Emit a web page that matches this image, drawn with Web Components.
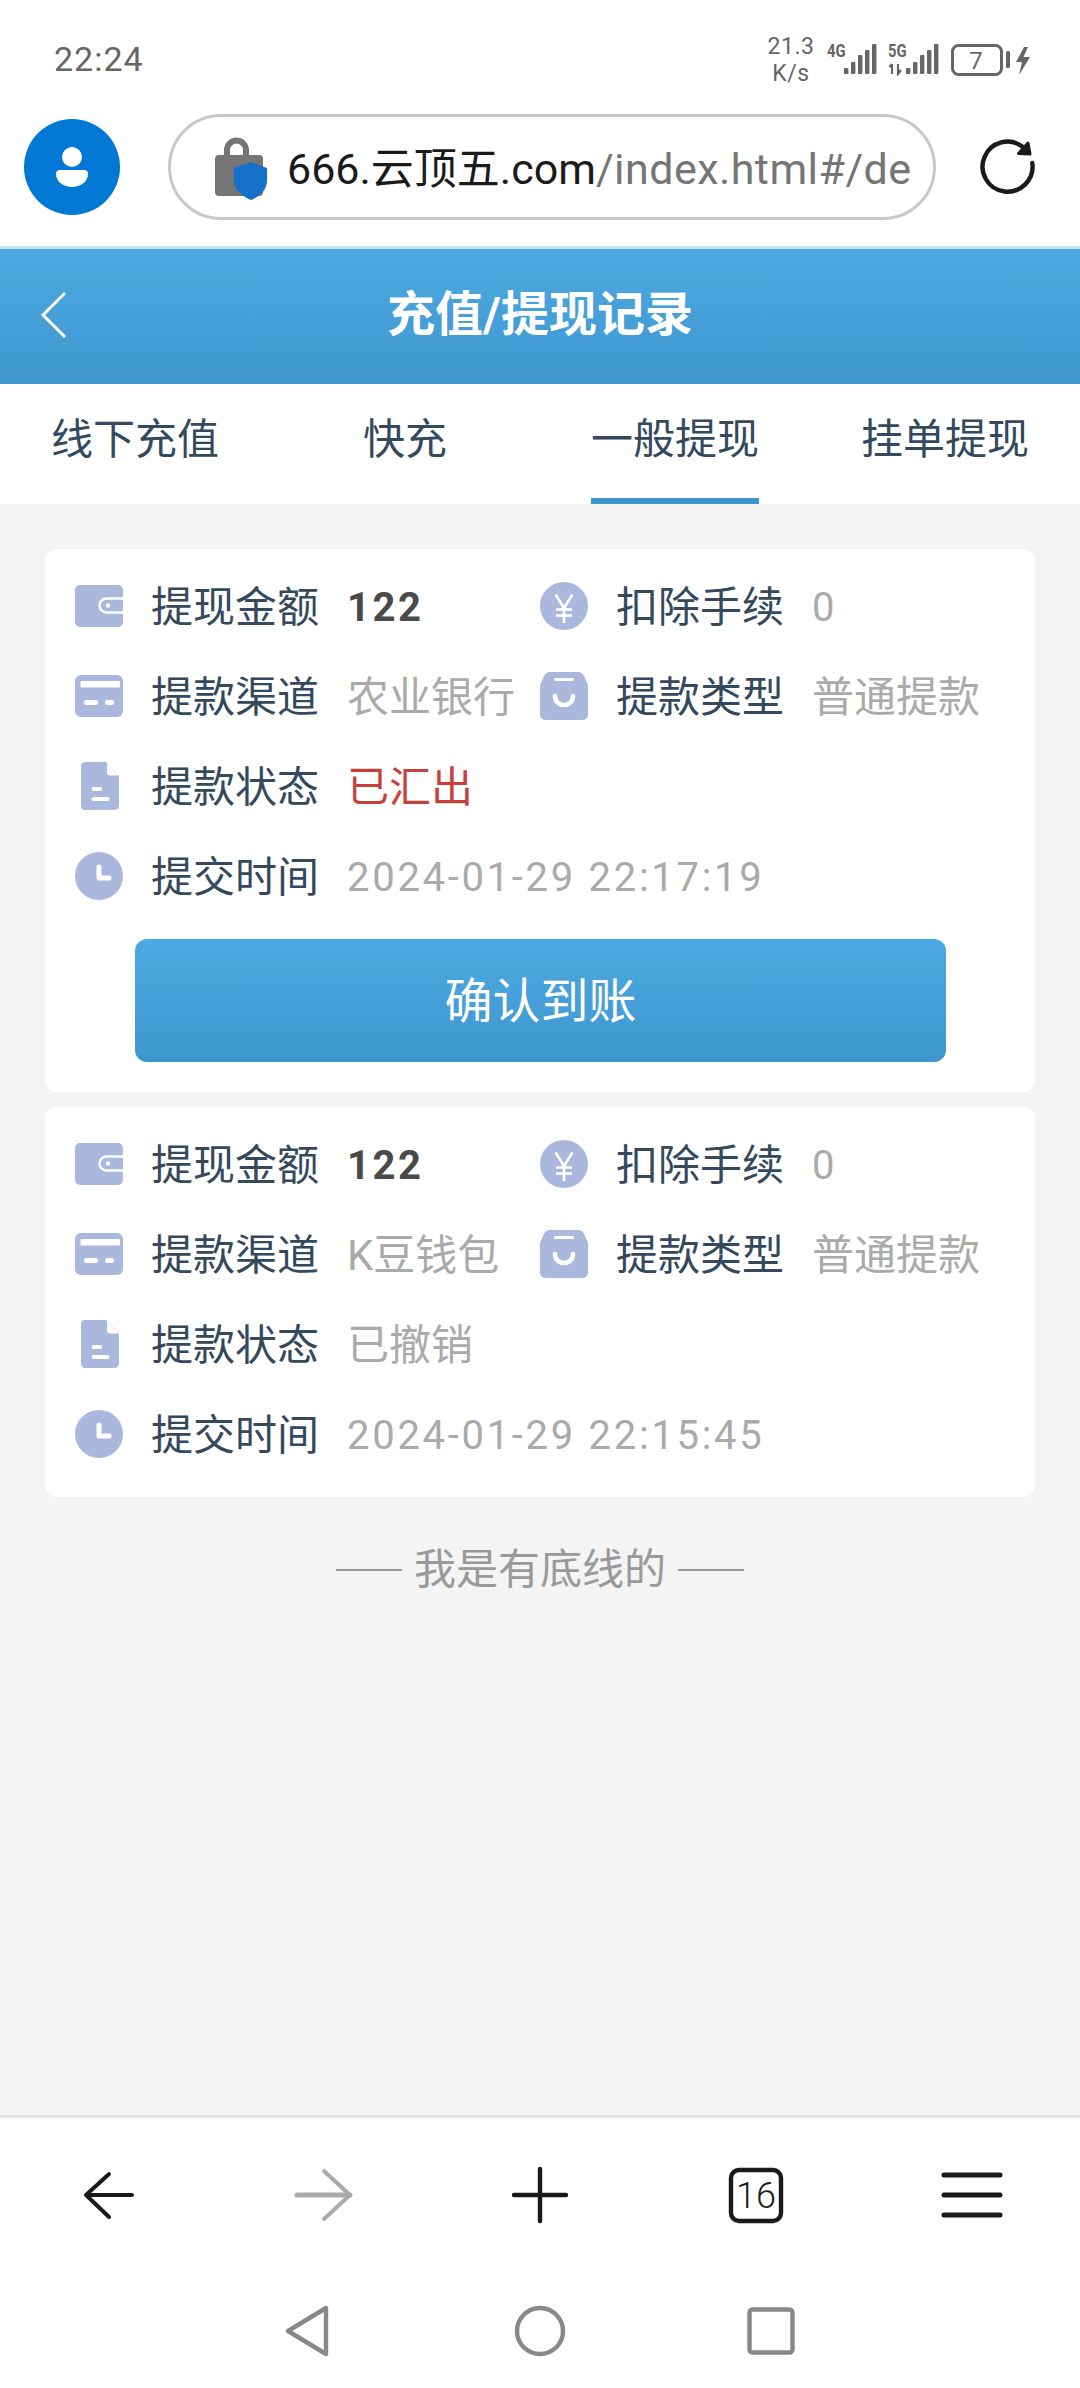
<!DOCTYPE html>
<html lang="zh-CN">
<head>
<meta charset="utf-8">
<title>充值/提现记录</title>
<style>
  html, body { margin: 0; padding: 0; background: #fff; }
  body { font-family: Roboto, "Noto Sans CJK SC", sans-serif; width: 1080px; height: 2388px; overflow: hidden; }
</style>
</head>
<body>
<phone-shell>
  <status-bar slot="top"></status-bar>
  <browser-bar slot="top"></browser-bar>
  <page-header slot="top" title="充值/提现记录"></page-header>
  <tab-strip slot="top" items="线下充值,快充,一般提现,挂单提现" active="2"></tab-strip>

  <record-card>
    <record-field icon="wallet" label="提现金额" value="122" kind="amount"></record-field>
    <record-field icon="yen" label="扣除手续" value="0" kind="num"></record-field>
    <record-field icon="card" label="提款渠道" value="农业银行"></record-field>
    <record-field icon="bag" label="提款类型" value="普通提款"></record-field>
    <record-field icon="doc" label="提款状态" value="已汇出" kind="alert" wide></record-field>
    <record-field icon="clock" label="提交时间" value="2024-01-29 22:17:19" kind="num" wide></record-field>
    <confirm-button slot="action">确认到账</confirm-button>
  </record-card>

  <record-card>
    <record-field icon="wallet" label="提现金额" value="122" kind="amount"></record-field>
    <record-field icon="yen" label="扣除手续" value="0" kind="num"></record-field>
    <record-field icon="card" label="提款渠道" value="K豆钱包"></record-field>
    <record-field icon="bag" label="提款类型" value="普通提款"></record-field>
    <record-field icon="doc" label="提款状态" value="已撤销" wide></record-field>
    <record-field icon="clock" label="提交时间" value="2024-01-29 22:15:45" kind="num" wide></record-field>
  </record-card>

  <list-end>我是有底线的</list-end>

  <browser-toolbar slot="bottom"></browser-toolbar>
  <system-nav slot="bottom"></system-nav>
</phone-shell>

<script>
  // Small helper: every element gets an open shadow root from a markup string.
  class Base extends HTMLElement {
    render(html) {
      if (!this.shadowRoot) this.attachShadow({ mode: 'open' });
      this.shadowRoot.innerHTML = html;
    }
  }

  customElements.define('phone-shell', class extends Base {
    connectedCallback() {
      this.render(`<style>
        :host { display: flex; flex-direction: column; width: 1080px; height: 2388px; background: #fff; }
        main { flex: 1; min-height: 0; background: #f4f4f4; padding: 45px 45px 0; display: flex; flex-direction: column; gap: 15px; }
      </style>
      <slot name="top"></slot>
      <main><slot></slot></main>
      <slot name="bottom"></slot>`);
    }
  });

  customElements.define('status-bar', class extends Base {
    connectedCallback() {
      // One signal cluster: network tag above, bars at the right, optional up/down marks under the tag.
      const signal = (tag, arrows, xs) => {
        const tops = [24, 18, 11, 6, 0];
        const bars = xs.map((x, i) => `<rect x="${x}" y="${tops[i]}" width="4.4" height="${30 - tops[i]}" rx="1" fill="#666"/>`).join('');
        const marks = arrows ? `<path d="M4 30V20M1.5 23L4 20M10 20V30L13 26" stroke="#666" stroke-width="2.2" fill="none"/>` : '';
        return `<div class="sig"><span>${tag}</span><svg width="52" height="32" viewBox="0 0 52 32">${marks}${bars}</svg></div>`;
      };
      this.render(`<style>
        :host { display: flex; align-items: center; justify-content: space-between; height: 96px; padding: 24px 49px 0 54px; box-sizing: border-box; color: #666; font-family: Roboto, sans-serif; }
        .time { font-size: 34px; letter-spacing: 1px; margin-top: -2px; }
        .right { display: flex; align-items: center; }
        .speed { display: flex; flex-direction: column; align-items: center; width: 46px; font-size: 23px; line-height: 27px; letter-spacing: .6px; margin-right: 13px; }
        .sig { position: relative; margin-right: 9px; }
        .sig.last { margin-right: 11px; }
        .sig span { position: absolute; left: 0; top: -3px; font: 700 19px/19px Roboto, sans-serif; transform: scaleX(.78); transform-origin: 0 0; }
        svg { display: block; }
      </style>
      <span class="time">22:24</span>
      <div class="right">
        <div class="speed"><span>21.3</span><span>K/s</span></div>
        ${signal('4G', false, [17, 24, 31, 38, 45])}
        ${signal('5G', true, [18, 25, 32, 39, 46]).replace('class="sig"', 'class="sig last"')}
        <svg width="80" height="32" viewBox="0 0 80 32">
          <rect x="1.5" y="1.5" width="49" height="29" rx="6" fill="none" stroke="#666" stroke-width="3"/>
          <text x="25" y="25" text-anchor="middle" font-family="Roboto" font-size="24" fill="#666">7</text>
          <rect x="55" y="7" width="4" height="17" rx="1.5" fill="#666"/>
          <path d="M73 3L65 18H71L68 31L79 13H72.5L77 3Z" fill="#666"/>
        </svg>
      </div>`);
    }
  });

  customElements.define('browser-bar', class extends Base {
    connectedCallback() {
      this.render(`<style>
        :host { display: flex; align-items: center; height: 150px; padding: 0 44px 8px 24px; box-sizing: border-box; background: #fff; }
        .avatar { flex: none; width: 96px; height: 96px; margin-right: 48px; border-radius: 50%; background: #0078d4; display: flex; align-items: center; justify-content: center; }
        .pill { flex: 1; min-width: 0; height: 106px; box-sizing: border-box; border: 3.5px solid #c8c8c8; border-radius: 53px; display: flex; align-items: center; padding: 0 21px 0 44px; gap: 20px; }
        .url { flex: 1; min-width: 0; overflow: hidden; white-space: nowrap; font-size: 43px; line-height: 60px; padding-top: 3px; color: #757575; letter-spacing: .45px; font-family: Roboto, "Noto Sans CJK SC", sans-serif; }
        .url b { font-weight: 400; color: #1a1a1a; letter-spacing: 0; }
        svg { display: block; flex: none; }
        .lock { margin-top: 3px; }
        .reload { margin-left: 44px; }
      </style>
      <div class="avatar">
        <svg width="32" height="40" viewBox="0 0 32 40" fill="#fff">
          <circle cx="16" cy="10" r="10"/>
          <path d="M4 23H28Q32 23 32 27C32 35 24 40 16 40S0 35 0 27Q0 23 4 23Z"/>
        </svg>
      </div>
      <div class="pill">
        <svg class="lock" width="52" height="64" viewBox="0 0 52 64">
          <path d="M12 20V13a9.5 9.5 0 0 1 19 0V20" fill="none" stroke="#757575" stroke-width="6"/>
          <rect x="0" y="18" width="48" height="41" rx="4" fill="#757575"/>
          <path d="M36 25L52 31V44C52 54 43 60 36 63C29 60 19 54 19 44V31Z" fill="#1470c8"/>
        </svg>
        <div class="url"><b>666.云顶五.com</b>/index.html#/de</div>
      </div>
      <svg class="reload" width="56" height="56" viewBox="0 0 56 56" fill="none" stroke="#1a1a1a" stroke-width="4.4" stroke-linecap="round" stroke-linejoin="round">
        <path d="M52.3 24A25 25 0 1 1 43 8"/>
        <path d="M48 4L50 15L38.5 14.5Z" fill="#1a1a1a" stroke-width="3"/>
      </svg>`);
    }
  });

  customElements.define('page-header', class extends Base {
    connectedCallback() {
      this.render(`<style>
        :host { display: grid; grid-template-columns: 1fr auto 1fr; align-items: center; height: 138px; box-sizing: border-box; border-top: 3px solid #cfe3ef; padding-bottom: 3px; background: linear-gradient(#4da9e1, #3f96cf); background-origin: padding-box; color: #fff; }
        h1 { margin: 0; font: 700 48px/1 Roboto, "Noto Sans CJK SC", sans-serif; }
        svg { display: block; margin-left: 40px; }
      </style>
      <svg width="28" height="48" viewBox="0 0 28 48" fill="none" stroke="#fff" stroke-width="3"><path d="M25 2L3 24L25 46"/></svg>
      <h1>${this.getAttribute('title')}</h1>
      <span></span>`);
    }
  });

  customElements.define('tab-strip', class extends Base {
    connectedCallback() {
      const active = +this.getAttribute('active');
      const items = this.getAttribute('items').split(',').map((t, i) =>
        `<div class="tab"><span class="${i === active ? 'on' : ''}">${t}</span></div>`).join('');
      this.render(`<style>
        :host { display: grid; grid-template-columns: repeat(4, 1fr); height: 120px; background: #fff; color: #34495e; font: 42px/1 Roboto, "Noto Sans CJK SC", sans-serif; }
        .tab { display: flex; justify-content: center; }
        span { display: flex; align-items: center; box-sizing: border-box; height: 120px; padding-bottom: 3px; border-bottom: 6px solid transparent; }
        span.on { border-bottom-color: #3f96cf; }
      </style>${items}`);
    }
  });

  customElements.define('record-card', class extends Base {
    connectedCallback() {
      this.render(`<style>
        :host { display: block; background: #fff; border-radius: 12px; padding: 12px 30px 18px; }
        .grid { display: grid; grid-template-columns: 465px 1fr; grid-auto-rows: 90px; }
        ::slotted([slot=action]) { margin: 18px 0 12px 60px; }
      </style>
      <div class="grid"><slot></slot></div>
      <slot name="action"></slot>`);
    }
  });

  const ICONS = {
    wallet: `<rect y="3" width="48" height="42" rx="5" fill="#a9b8dc"/>
      <path d="M48 16.5H31.5a7 7 0 0 0 0 14H48" fill="none" stroke="#fff" stroke-width="2.4"/>
      <circle cx="33" cy="23.5" r="2.2" fill="#fff"/>`,
    yen: `<circle cx="24" cy="24" r="24" fill="#a9b8dc"/>
      <path d="M15.5 12.5L24 26L32.5 12.5M16 27.5H32M16 33.5H32M24 26V41" fill="none" stroke="#fff" stroke-width="2.6"/>`,
    card: `<rect y="3" width="48" height="42" rx="6" fill="#a9b8dc"/>
      <rect x="5.5" y="9" width="39.5" height="6.5" rx="1" fill="#fff"/>
      <rect x="9" y="28" width="14" height="5" rx="2.5" fill="#fff"/>
      <rect x="30" y="28" width="9" height="5" rx="2.5" fill="#fff"/>`,
    bag: `<path d="M11 0H37C42 0 43 2 45 6L48 13V42Q48 48 42 48H6Q0 48 0 42V13L3 6C5 2 6 0 11 0Z" fill="#a9b8dc"/>
      <rect x="14" y="6" width="20" height="3" rx="1.5" fill="#fff"/>
      <path d="M15 24C15 36 33 36 33 24" fill="none" stroke="#fff" stroke-width="4.5" stroke-linecap="round"/>`,
    doc: `<path d="M10 0H31L44 14V43Q44 48 39 48H10Q6 48 6 43V4Q6 0 10 0Z" fill="#a9b8dc"/>
      <path d="M32 1.5L43.5 13.5H35Q32 13.5 32 10.5Z" fill="#fff"/>
      <rect x="16.5" y="25" width="10.5" height="4" rx="2" fill="#fff"/>
      <rect x="16.5" y="35" width="18" height="4" rx="2" fill="#fff"/>`,
    clock: `<circle cx="24" cy="24" r="24" fill="#a9b8dc"/>
      <path d="M24 15V26H34" fill="none" stroke="#fff" stroke-width="5" stroke-linecap="round" stroke-linejoin="round"/>`
  };

  customElements.define('record-field', class extends Base {
    connectedCallback() {
      const kind = this.getAttribute('kind') || 'text';
      this.render(`<style>
        :host { display: flex; align-items: center; white-space: nowrap; font: 42px/1 Roboto, "Noto Sans CJK SC", sans-serif; }
        :host([wide]) { grid-column: 1 / -1; }
        svg { flex: none; display: block; margin-right: 28px; }
        .label { color: #34495e; margin-right: 28px; padding-top: 3px; }
        .value { color: #aaa; padding-top: 3px; }
        .num { font-size: 40px; letter-spacing: 2.7px; }
        .amount { color: #4a4a4a; font-weight: 700; font-size: 40px; letter-spacing: 2.5px; }
        .alert { color: #c8403c; }
      </style>
      <svg width="48" height="48" viewBox="0 0 48 48">${ICONS[this.getAttribute('icon')]}</svg>
      <span class="label">${this.getAttribute('label')}</span>
      <span class="value ${kind}">${this.getAttribute('value')}</span>`);
    }
  });

  customElements.define('confirm-button', class extends Base {
    connectedCallback() {
      this.render(`<style>
        :host { display: flex; align-items: center; justify-content: center; box-sizing: border-box; width: 811px; height: 123px; padding-top: 3px; border-radius: 12px; background: linear-gradient(#4da9e1, #3f96cf); color: #fff; font: 48px/1 Roboto, "Noto Sans CJK SC", sans-serif; }
      </style><slot></slot>`);
    }
  });

  customElements.define('list-end', class extends Base {
    connectedCallback() {
      this.render(`<style>
        :host { display: flex; align-items: center; justify-content: center; gap: 12px; margin-top: 28px; height: 60px; color: #999; font: 42px/1 Roboto, "Noto Sans CJK SC", sans-serif; }
        i { display: block; width: 66px; height: 2px; background: #999; }
      </style><i></i><slot></slot><i></i>`);
    }
  });

  customElements.define('browser-toolbar', class extends Base {
    connectedCallback() {
      this.render(`<style>
        :host { display: grid; grid-template-columns: repeat(5, 216px); height: 157px; box-sizing: border-box; border-top: 3px solid #e4e4e4; background: #fff; }
        div { display: flex; align-items: center; justify-content: center; }
        svg { display: block; overflow: visible; }
      </style>
      <div><svg width="60" height="60" viewBox="0 0 60 60" fill="none" stroke="#1a1a1a" stroke-width="4" stroke-linecap="round" stroke-linejoin="round"><path d="M31 9L8 30L31 52M8 30H54"/></svg></div>
      <div><svg width="60" height="60" viewBox="0 0 60 60" fill="none" stroke="#aaa" stroke-width="4" stroke-linecap="round" stroke-linejoin="round"><path d="M30 6L56 30L30 54"/><path d="M3 30H56" stroke-width="5"/></svg></div>
      <div><svg width="60" height="60" viewBox="0 0 60 60" fill="none" stroke="#1a1a1a" stroke-width="4.4" stroke-linecap="round"><path d="M30 4V56M4 30H56"/></svg></div>
      <div><svg width="60" height="60" viewBox="0 0 60 60"><rect x="5" y="5" width="50" height="51" rx="8" fill="none" stroke="#1a1a1a" stroke-width="4.4"/><text x="30" y="43" text-anchor="middle" font-family="Roboto" font-weight="300" font-size="36" fill="#1a1a1a">16</text></svg></div>
      <div><svg width="60" height="48" viewBox="0 0 60 48" fill="none" stroke="#1a1a1a" stroke-width="5" stroke-linecap="round"><path d="M2 4H58M2 24H58M2 44H58"/></svg></div>`);
    }
  });

  customElements.define('system-nav', class extends Base {
    connectedCallback() {
      this.render(`<style>
        :host { display: grid; grid-template-columns: repeat(3, 231px); justify-content: center; height: 116px; background: #fff; }
        div { display: flex; align-items: center; justify-content: center; padding-top: 2px; }
        svg { display: block; }
      </style>
      <div><svg width="54" height="54" viewBox="0 0 54 54" fill="none" stroke="#888" stroke-width="4.4" stroke-linejoin="round"><path d="M44 4V50L6 27Z"/></svg></div>
      <div><svg width="54" height="54" viewBox="0 0 54 54" fill="none" stroke="#888" stroke-width="4.4"><circle cx="27" cy="27" r="23"/></svg></div>
      <div><svg width="54" height="54" viewBox="0 0 54 54" fill="none" stroke="#888" stroke-width="4.4"><rect x="5.5" y="5.5" width="43" height="43" rx="3"/></svg></div>`);
    }
  });
</script>
</body>
</html>
